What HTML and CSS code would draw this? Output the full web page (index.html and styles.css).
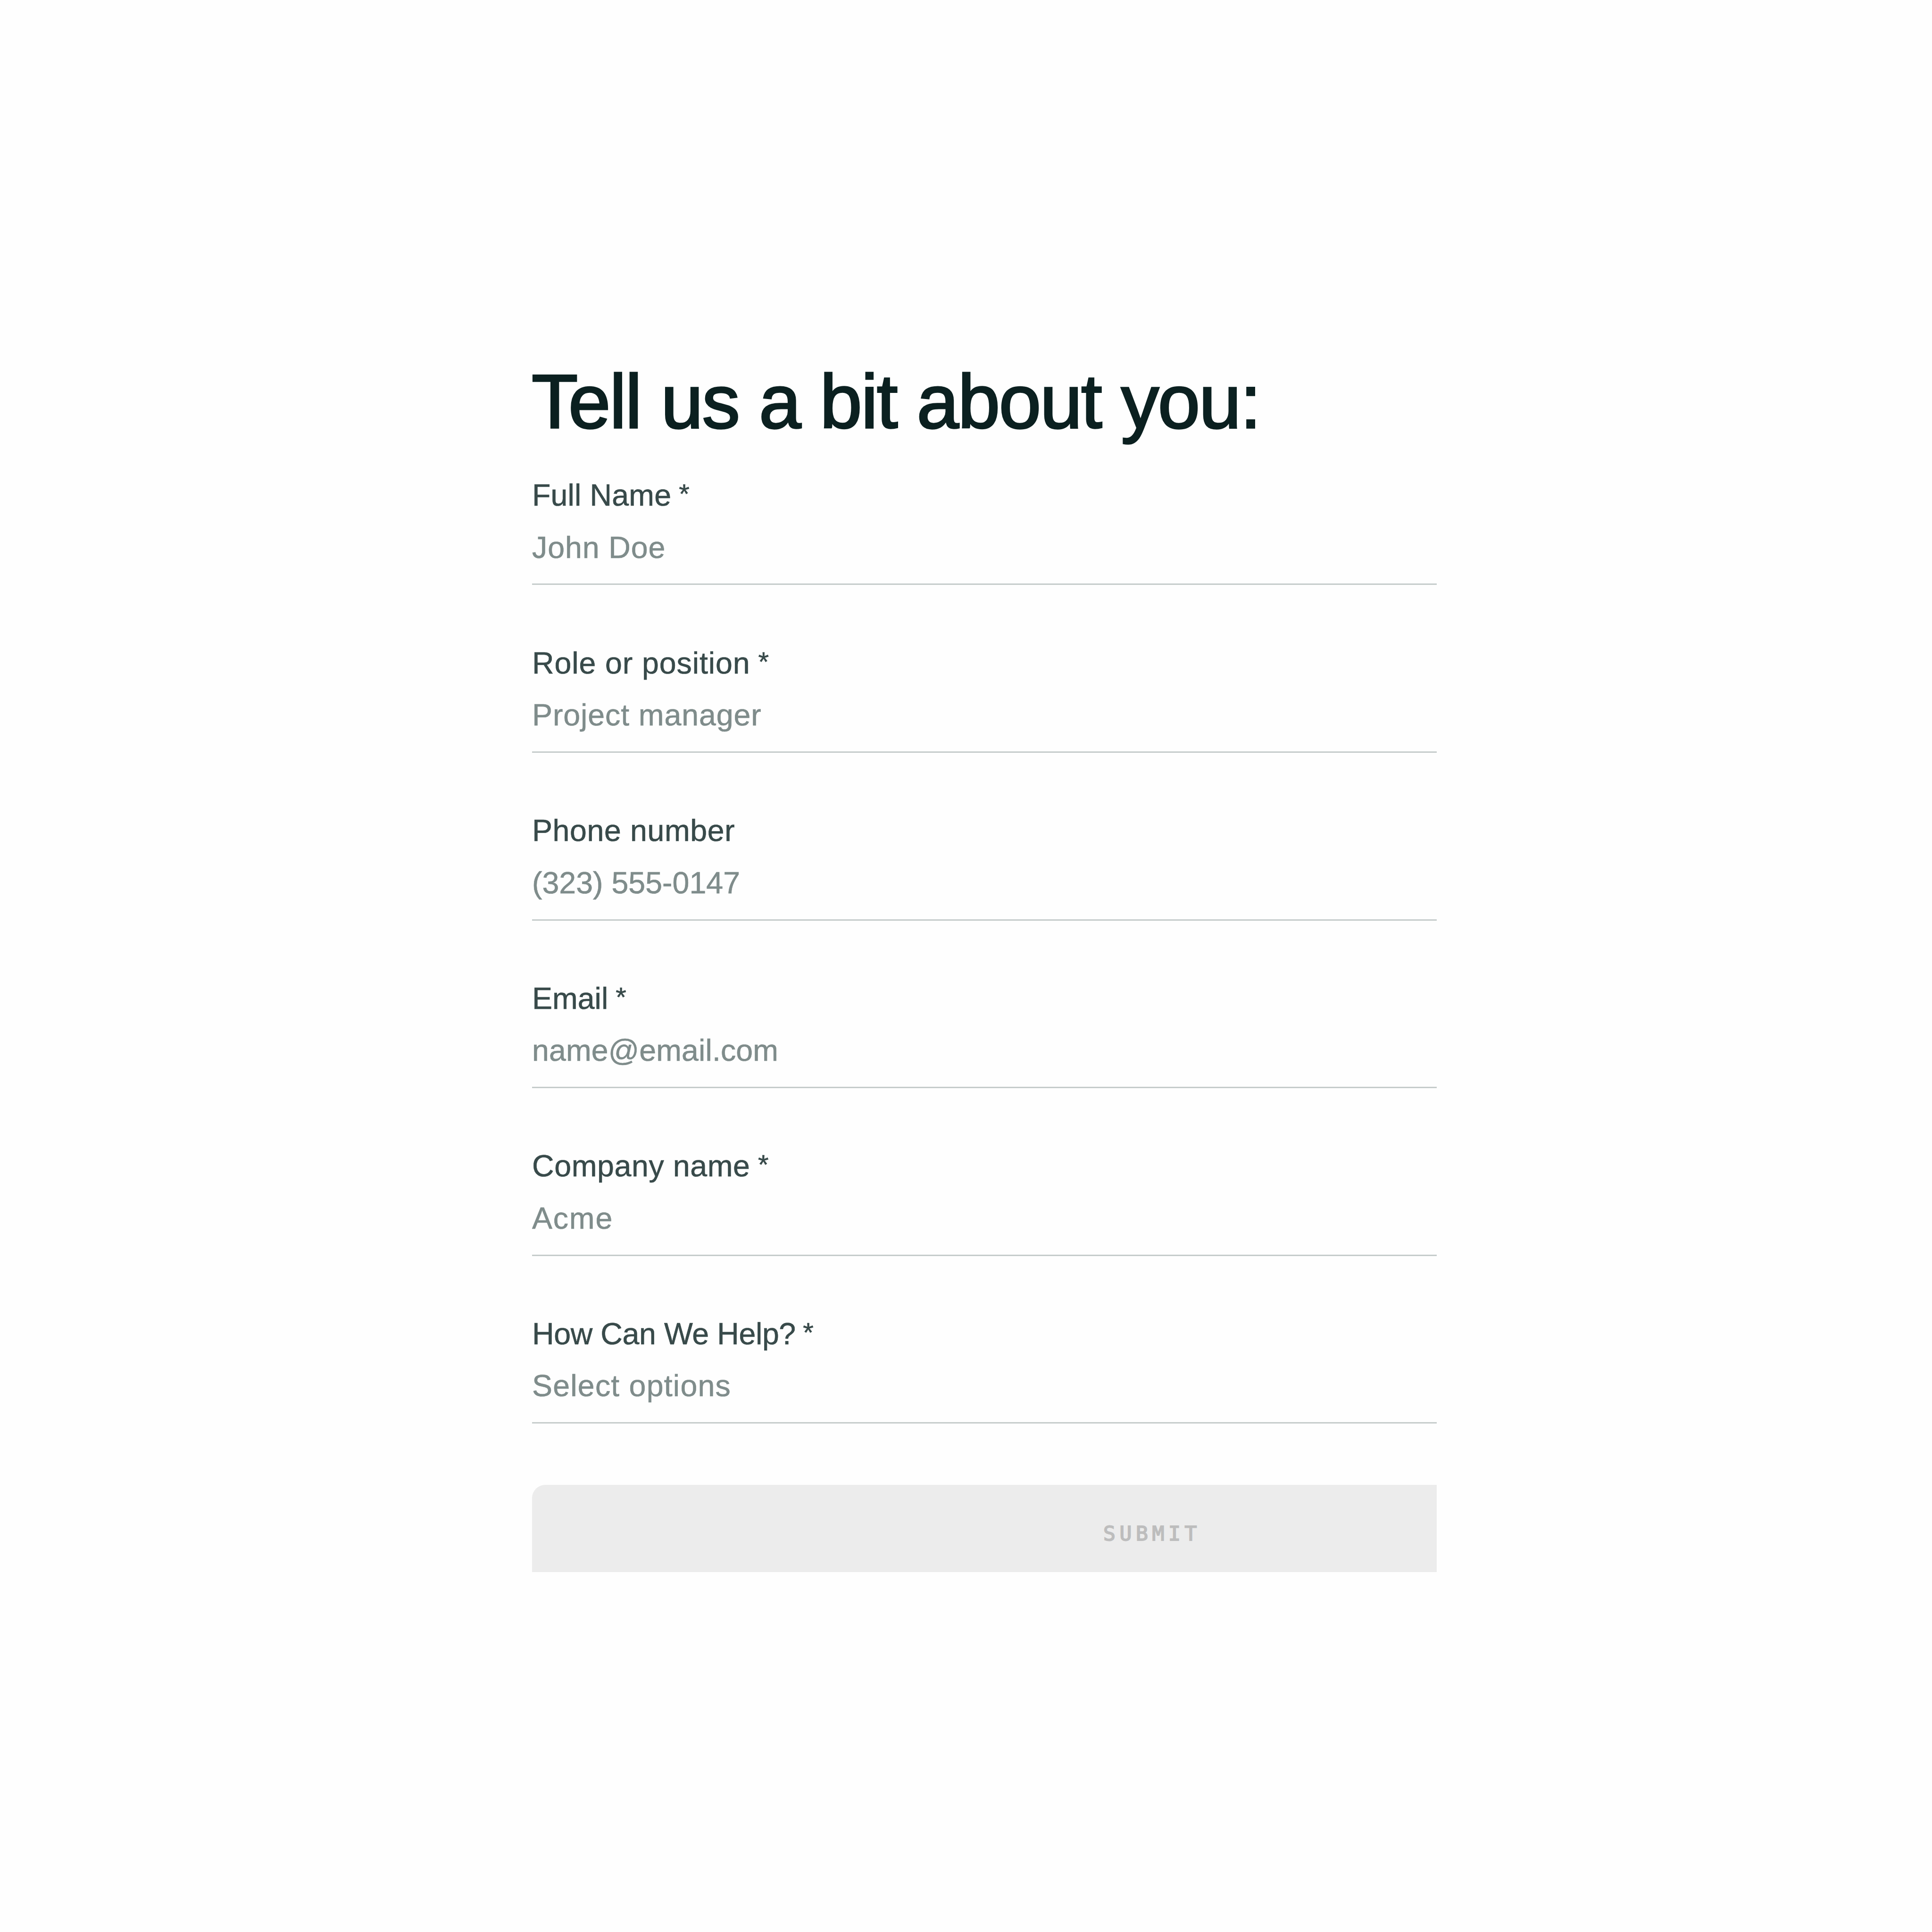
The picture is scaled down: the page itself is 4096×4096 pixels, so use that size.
FILE: index.html
```
<!DOCTYPE html>
<html lang="en">
<head>
    <meta charset="UTF-8">
    <meta name="viewport" content="width=device-width, initial-scale=1.0">
    <title>Contact</title>
    <link rel="stylesheet" href="styles.css">
</head>
<body>
    <div class="container">
        <h1>Tell us a bit about you:</h1>
        <form id="contact-form">
            <div class="form-group">
                <label for="full-name" class="name-label">Full Name <span class="required">*</span></label>
                <input type="text" id="full-name" placeholder="John Doe">
            </div>
            <div class="form-group">
                <label for="role">Role or position <span class="required">*</span></label>
                <input type="text" id="role" placeholder="Project manager">
            </div>
            <div class="form-group">
                <label for="phone" class="phone-label">Phone number</label>
                <input type="tel" id="phone" placeholder="(323) 555-0147">
            </div>
            <div class="form-group">
                <label for="email" class="email-label">Email <span class="required">*</span></label>
                <input type="email" id="email" placeholder="name@email.com">
            </div>
            <div class="form-group">
                <label for="company" class="company-label">Company name <span class="required">*</span></label>
                <input type="text" id="company" placeholder="Acme">
            </div>
            <div class="form-group">
                <label for="help" class="help-label">How Can We Help? <span class="required">*</span></label>
                <input type="text" id="help" placeholder="Select options">
            </div>
            <button type="submit" class="btn" disabled>SUBMIT</button>
        </form>
    </div>
</body>
</html>
```
FILE: styles.css
```
* {
    box-sizing: border-box;
}
body {
    font-family: "Liberation Sans", Arial, sans-serif;
    background-color: #fefefe;
    margin: 0;
}
.container {
    width: 1918px;
    margin-left: 1128px;
    padding-top: 761px;
}
h1 {
    margin: 0 0 53px -1px;
    font-size: 161px;
    font-weight: normal;
    line-height: 180px;
    letter-spacing: -2.4px;
    color: #0b2020;
    -webkit-text-stroke: 3.4px #0b2020;
    white-space: nowrap;
}
.form-group {
    margin-bottom: 109.2px;
    font-size: 64.5px;
    letter-spacing: 0.9px;
    -webkit-text-stroke: 0.6px;
}
.form-group label {
    display: block;
    height: 111px;
    line-height: 113px;
    color: #384a4a;
}
.form-group .name-label {
    letter-spacing: 0.15px;
}
.form-group .phone-label,
.form-group .company-label {
    letter-spacing: 0.6px;
}
.form-group .email-label {
    letter-spacing: 0;
}
.form-group .help-label {
    letter-spacing: -0.4px;
}
.required {
    margin-left: -2px;
    font-size: 58px;
    line-height: 1;
    vertical-align: 5px;
}
.form-group input {
    display: block;
    width: 100%;
    height: 135.4px;
    padding: 0 0 21.4px;
    border: none;
    border-bottom: 3px solid #c5cccb;
    border-radius: 0;
    background: none;
    font: inherit;
    letter-spacing: inherit;
    outline: none;
}
.form-group input::placeholder {
    color: #7f8c8b;
    opacity: 1;
}
#phone {
    letter-spacing: 0;
}
#email {
    letter-spacing: 0.1px;
}
#company {
    letter-spacing: 1.8px;
}
#help {
    letter-spacing: 1.2px;
}
.form-group:nth-last-child(2) {
    margin-bottom: 0;
}
.btn {
    display: flex;
    align-items: flex-start;
    width: 100%;
    height: 184.5px;
    margin-top: 130px;
    padding: 73px 0 0 1211px;
    border: none;
    border-radius: 28px 0 0 0;
    background-color: #ececec;
    color: #bdbdbd;
    font-family: "DejaVu Sans Mono", monospace;
    font-size: 43px;
    -webkit-text-stroke: 2px #bdbdbd;
    line-height: 60px;
    letter-spacing: 8.6px;
}
```
